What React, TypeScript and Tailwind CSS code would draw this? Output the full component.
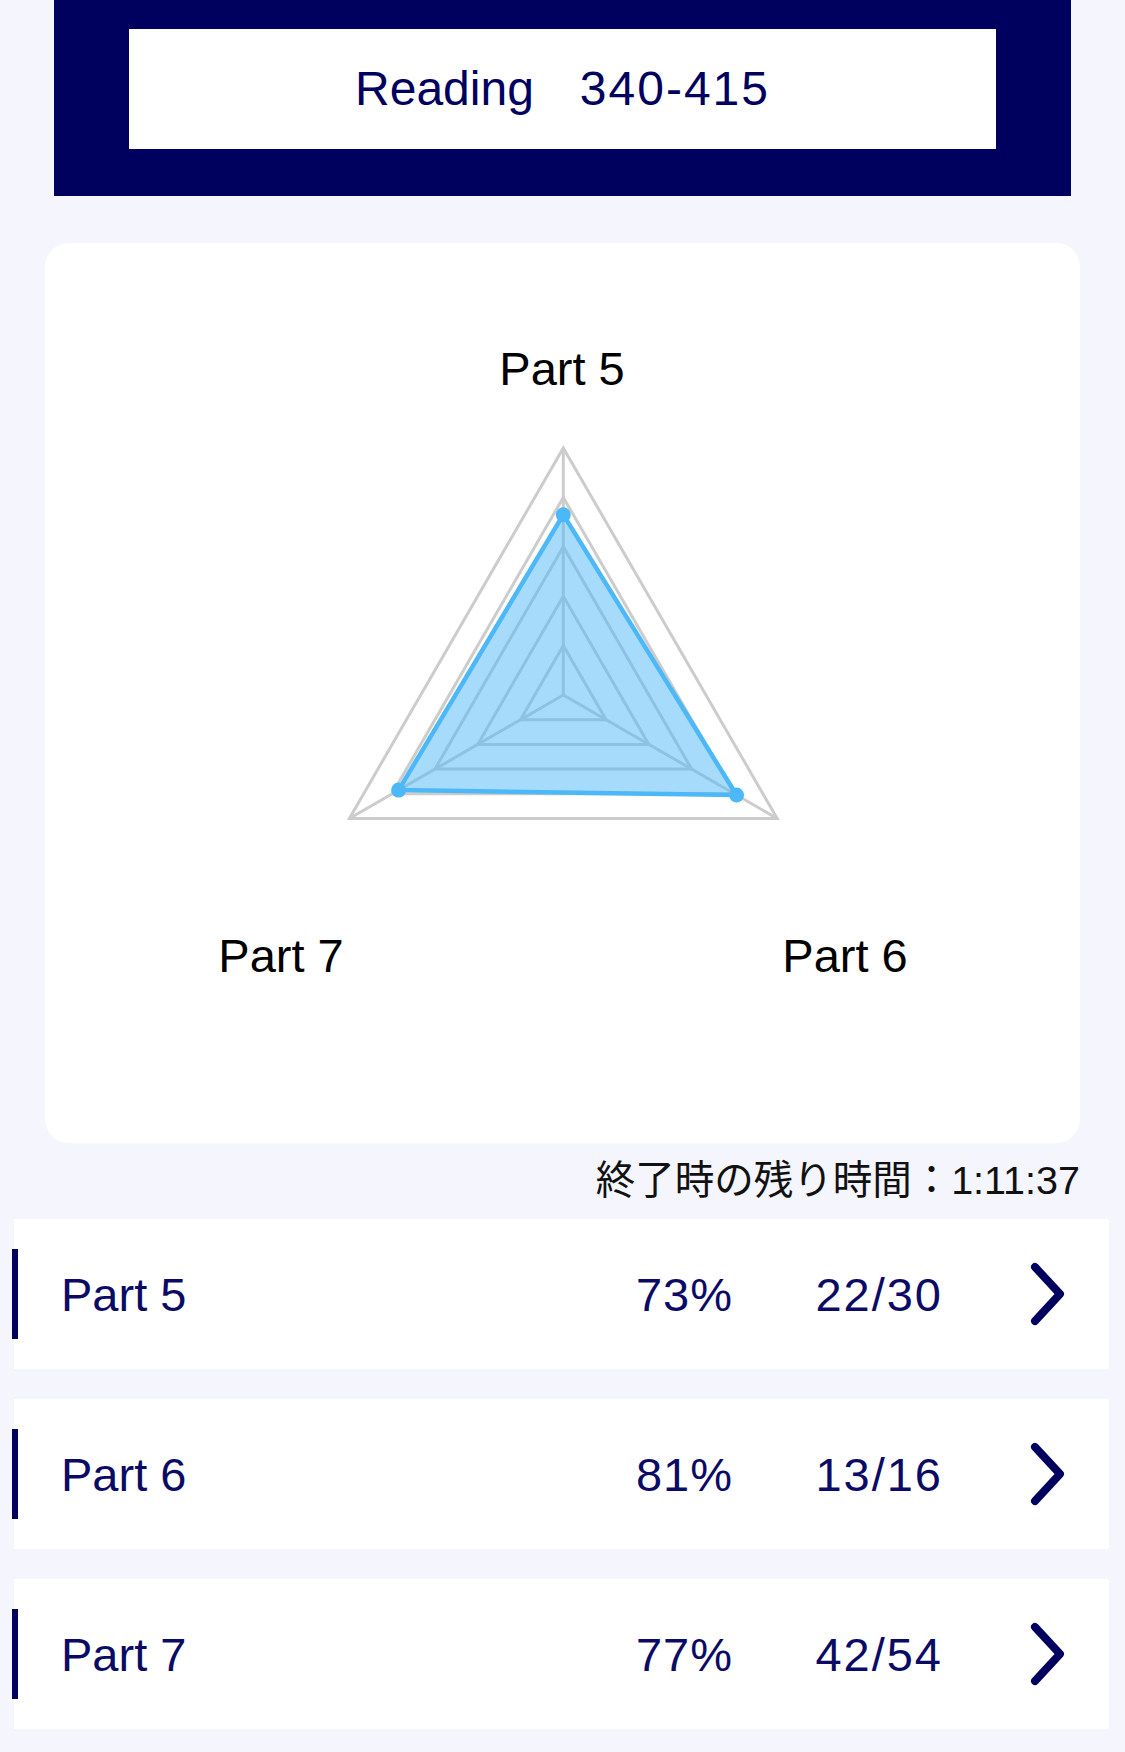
import React from 'react';

const NAVY = '#00005f';

const PARTS = [
  { name: 'Part 5', rate: 73, score: '22/30' },
  { name: 'Part 6', rate: 81, score: '13/16' },
  { name: 'Part 7', rate: 77, score: '42/54' },
];

// radar geometry (card-relative px)
const CX = 518.3;
const CY = 452;
const R = 247;
// angles: Part 5 top, Part 6 bottom-right, Part 7 bottom-left
const DIRS = [
  [0, -1],
  [0.866, 0.5],
  [-0.866, 0.5],
];

const pt = (i: number, v: number) => `${CX + DIRS[i][0] * R * v},${CY + DIRS[i][1] * R * v}`;

const RadarChart: React.FC = () => {
  const levels = [0.2, 0.4, 0.6, 0.8, 1];
  const values = [0.73, 0.81, 0.77];

  return (
    <svg width="1034" height="900" viewBox="0 0 1034 900" className="block">
      {/* grid */}
      {levels.map(l => (
        <polygon
          key={l}
          points={[0, 1, 2].map(i => pt(i, l)).join(' ')}
          fill="none"
          stroke="#cccccc"
          strokeWidth="3"
        />
      ))}
      {[0, 1, 2].map(i => (
        <line
          key={i}
          x1={CX}
          y1={CY}
          x2={CX + DIRS[i][0] * R}
          y2={CY + DIRS[i][1] * R}
          stroke="#cccccc"
          strokeWidth="3"
        />
      ))}

      {/* data */}
      <polygon
        points={values.map((v, i) => pt(i, v)).join(' ')}
        fill="rgba(77,184,247,0.5)"
        stroke="#4db8f7"
        strokeWidth="4.5"
        strokeLinejoin="round"
      />
      {values.map((v, i) => (
        <circle
          key={i}
          cx={CX + DIRS[i][0] * R * v}
          cy={CY + DIRS[i][1] * R * v}
          r="7.5"
          fill="#4db8f7"
        />
      ))}

      {/* labels */}
      <g fill="#000" fontSize="47" fontFamily='"Liberation Sans", Arial, sans-serif' textAnchor="middle">
        <text x="517" y="142">Part 5</text>
        <text x="236" y="729">Part 7</text>
        <text x="800" y="729">Part 6</text>
      </g>
    </svg>
  );
};

const Chevron: React.FC = () => (
  <svg width="40" height="66" viewBox="0 0 40 66" className="ml-[84px] shrink-0">
    <polyline
      points="8,6 33,33 8,60"
      fill="none"
      stroke={NAVY}
      strokeWidth="8"
      strokeLinecap="round"
      strokeLinejoin="round"
    />
  </svg>
);

const App: React.FC = () => {
  return (
    <div
      className="min-h-screen bg-[#f4f5fd] pb-[23px]"
      style={{ fontFamily: '"Liberation Sans", "Noto Sans CJK JP", sans-serif' }}
    >
      {/* Header */}
      <div className="mx-[54px] h-[196px] bg-[#00005f] px-[75px] pt-[29px]">
        <div className="flex h-[120px] items-center justify-center gap-[46px] bg-white text-[48px] leading-none text-[#00005f]">
          <span>Reading</span>
          <span className="tracking-[2px]">340-415</span>
        </div>
      </div>

      {/* Chart */}
      <div className="mx-[45px] mt-[47px] h-[900px] overflow-hidden rounded-[24px] bg-white">
        <RadarChart />
      </div>

      {/* Remaining time */}
      <div className="flex h-[76px] items-center justify-end pr-[45px] text-[39.5px] leading-none text-[#111111]">
        終了時の残り時間：1:11:37
      </div>

      {/* Part rows */}
      <div className="flex flex-col gap-[30px] pl-[14px] pr-[16px]">
        {PARTS.map(part => (
          <div
            key={part.name}
            className="flex h-[150px] items-center bg-white pr-[42px] text-[47px] leading-none text-[#0b0b66]"
          >
            <div className="-ml-[2px] h-[90px] w-[6px] shrink-0 bg-[#00005f]" />
            <span className="ml-[43px] flex-1">{part.name}</span>
            <span className="w-[150px] text-right tracking-[1px]">{part.rate}%</span>
            <span className="w-[210px] text-right tracking-[2px]">{part.score}</span>
            <Chevron />
          </div>
        ))}
      </div>
    </div>
  );
};

export default App;
